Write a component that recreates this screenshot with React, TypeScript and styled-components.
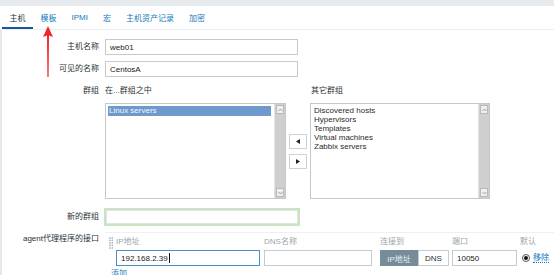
import React from "react"
import styled, { createGlobalStyle } from "styled-components"

const GlobalStyle = createGlobalStyle`
  html, body {
    margin: 0;
    padding: 0;
    background: #fff;
    overflow: hidden;
  }
  body {
    font-family: "Liberation Sans", "Noto Sans CJK SC", sans-serif;
    font-size: 8px;
    color: #2a3338;
  }
`

const Page = styled.div`
  position: relative;
  width: 554px;
  height: 275px;
  overflow: hidden;
`

const TopBand = styled.div`
  height: 6px;
  background: #e8ebee;
`

const TabBar = styled.div`
  display: flex;
  height: 23px;
  padding-left: 2px;
  border-bottom: 1px solid #eceff1;
`

const Tab = styled.div<{ $active?: boolean }>`
  display: flex;
  align-items: center;
  padding: 0 7.5px;
  margin-top: 1px;
  color: ${(p) => (p.$active ? "#2a3338" : "#1479bd")};
  border-bottom: 2px solid ${(p) => (p.$active ? "#14599a" : "transparent")};
`

const FormBody = styled.div`
  display: flex;
  flex-direction: column;
  border-left: 2px solid #e6e9ec;
  padding-top: 9px;
  min-height: 260px;
`

const Row = styled.div<{ $top?: number; $align?: string }>`
  display: grid;
  grid-template-columns: 97px 1fr;
  column-gap: 6px;
  align-items: ${(p) => p.$align ?? "center"};
  margin-top: ${(p) => p.$top ?? 0}px;
`

const Label = styled.div`
  text-align: right;
  line-height: 10px;
  white-space: nowrap;
`

const TextInput = styled.div<{ $w: number; $focus?: boolean }>`
  box-sizing: border-box;
  width: ${(p) => p.$w}px;
  height: 16px;
  border: 1px solid ${(p) => (p.$focus ? "#4a8fc4" : "#c4ccd0")};
  padding-left: 4px;
  display: flex;
  align-items: center;
  background: #fff;
  color: #222;
`

const GreenInput = styled.div`
  box-sizing: border-box;
  width: 196px;
  height: 18px;
  margin-left: -1px;
  border: 2px solid #c9e3c4;
  background: #fff;
  box-shadow: inset 0 0 0 1px #dfe6e0;
`

const Caret = styled.span`
  display: inline-block;
  width: 1px;
  height: 10px;
  background: #111;
  margin-left: 1px;
`

const GroupArea = styled.div`
  display: grid;
  grid-template-columns: 181px 18px 180px;
  column-gap: 3px;
  row-gap: 7px;
  align-items: center;
`

const ListHead = styled.div`
  line-height: 10px;
`

const ListBox = styled.div`
  box-sizing: border-box;
  height: 96px;
  border: 1px solid #c2c8cc;
  display: flex;
  background: #fff;
`

const ListItems = styled.div`
  flex: 1;
  padding: 2px 2px 0 2px;
`

const Item = styled.div<{ $selected?: boolean }>`
  line-height: 9px;
  height: 9px;
  padding: 0 1px;
  color: ${(p) => (p.$selected ? "#f4f7fb" : "#2b2b2b")};
  background: ${(p) => (p.$selected ? "#6f98cc" : "transparent")};
  ${(p) => (p.$selected ? "height: 10px; line-height: 10px; margin-right: 1px;" : "")}
`

const ScrollTrack = styled.div`
  width: 10px;
  background: #cfcfcf;
  display: flex;
  flex-direction: column;
  justify-content: space-between;
  border-left: 1px solid #e4e4e4;
`

const ScrollBtn = styled.div`
  height: 9px;
  margin: 1px;
  background: #efefef;
  border: 1px solid #b9b9b9;
  box-sizing: border-box;
  display: flex;
  align-items: center;
  justify-content: center;
`

const MoveButtons = styled.div`
  display: flex;
  flex-direction: column;
  gap: 5px;
  margin-top: 1px;
`

const MoveBtn = styled.div`
  box-sizing: border-box;
  width: 18px;
  height: 15px;
  border: 1px solid #cdd3d6;
  background: #fff;
  display: flex;
  align-items: center;
  justify-content: center;
`

const InterfaceBlock = styled.div`
  display: flex;
  border-top: 1px solid #eef0f2;
  padding: 3px 0 0 4px;
  gap: 3px;
`

const DragHandle = styled.div`
  width: 4px;
  height: 12px;
  margin-top: 1px;
  background-image: radial-gradient(circle at 1px 1px, #a7b1b7 0.7px, transparent 0.9px);
  background-size: 2.5px 2.5px;
`

const IfaceGrid = styled.div`
  display: grid;
  grid-template-columns: 148px 116px 72px 68px auto;
  row-gap: 3px;
  align-items: center;
`

const Head = styled.div`
  line-height: 10px;
  color: #9aa6ac;
  padding-top: 1px;
`

const Segment = styled.div`
  display: flex;
  height: 16px;
  width: 69px;
`

const SegBtn = styled.div<{ $active?: boolean; $w: number }>`
  box-sizing: border-box;
  width: ${(p) => p.$w}px;
  display: flex;
  align-items: center;
  justify-content: center;
  background: ${(p) => (p.$active ? "#768d99" : "#fff")};
  color: ${(p) => (p.$active ? "#e9eef0" : "#2a3338")};
  border: 1px solid ${(p) => (p.$active ? "#768d99" : "#c4ccd0")};
`

const DefaultCell = styled.div`
  display: flex;
  align-items: center;
  gap: 3px;
  padding-left: 2px;
`

const Radio = styled.div`
  box-sizing: border-box;
  width: 8px;
  height: 8px;
  border-radius: 50%;
  border: 1px solid #555;
  display: flex;
  align-items: center;
  justify-content: center;
  &::after {
    content: "";
    width: 4px;
    height: 4px;
    border-radius: 50%;
    background: #111;
  }
`

const Link = styled.span`
  color: #1479bd;
  border-bottom: 1px dotted #1479bd;
  line-height: 9px;
`

const AddLink = styled.div`
  margin: 3px 0 0 6px;
  color: #1479bd;
  line-height: 10px;
`

const ArrowOverlay = styled.svg`
  position: absolute;
  left: 40px;
  top: 25px;
`

function Chevron(props: { up?: boolean }) {
  return (
    <svg width="5" height="4" viewBox="0 0 5 4">
      <path d={props.up ? "M0.5 3 L2.5 1 L4.5 3" : "M0.5 1 L2.5 3 L4.5 1"} fill="none" stroke="#888" strokeWidth="0.8" />
    </svg>
  )
}

function Triangle(props: { left?: boolean }) {
  return (
    <svg width="4" height="5" viewBox="0 0 4 5">
      <path d={props.left ? "M4 0 L0 2.5 L4 5 Z" : "M0 0 L4 2.5 L0 5 Z"} fill="#222" />
    </svg>
  )
}

function FakeList(props: { items: string[]; selected?: string }) {
  return (
    <ListBox>
      <ListItems>
        {props.items.map((it) => (
          <Item key={it} $selected={it === props.selected}>
            {it}
          </Item>
        ))}
      </ListItems>
      <ScrollTrack>
        <ScrollBtn>
          <Chevron up />
        </ScrollBtn>
        <ScrollBtn>
          <Chevron />
        </ScrollBtn>
      </ScrollTrack>
    </ListBox>
  )
}

const tabs = ["主机", "模板", "IPMI", "宏", "主机资产记录", "加密"]

export default function App() {
  return (
    <Page>
      <GlobalStyle />
      <TopBand />
      <TabBar>
        {tabs.map((t, i) => (
          <Tab key={t} $active={i === 0}>
            {t}
          </Tab>
        ))}
      </TabBar>
      <FormBody>
        <Row>
          <Label>主机名称</Label>
          <TextInput $w={193}>web01</TextInput>
        </Row>
        <Row $top={6}>
          <Label>可见的名称</Label>
          <TextInput $w={193}>CentosA</TextInput>
        </Row>
        <Row $top={9} $align="start">
          <Label>群组</Label>
          <GroupArea>
            <ListHead>在...群组之中</ListHead>
            <div />
            <ListHead style={{ paddingLeft: 1 }}>其它群组</ListHead>
            <FakeList items={["Linux servers"]} selected="Linux servers" />
            <MoveButtons>
              <MoveBtn>
                <Triangle left />
              </MoveBtn>
              <MoveBtn>
                <Triangle />
              </MoveBtn>
            </MoveButtons>
            <FakeList
              items={["Discovered hosts", "Hypervisors", "Templates", "Virtual machines", "Zabbix servers"]}
            />
          </GroupArea>
        </Row>
        <Row $top={9}>
          <Label>新的群组</Label>
          <GreenInput />
        </Row>
        <Row $top={6} $align="start">
          <Label style={{ paddingTop: 2 }}>agent代理程序的接口</Label>
          <div>
            <InterfaceBlock>
              <DragHandle />
              <IfaceGrid>
                <Head>IP地址</Head>
                <Head>DNS名称</Head>
                <Head>连接到</Head>
                <Head>端口</Head>
                <Head>默认</Head>
                <TextInput $w={144} $focus>
                  192.168.2.39
                  <Caret />
                </TextInput>
                <TextInput $w={108} />
                <Segment>
                  <SegBtn $active $w={38}>
                    IP地址
                  </SegBtn>
                  <SegBtn $w={31}>DNS</SegBtn>
                </Segment>
                <TextInput $w={65}>10050</TextInput>
                <DefaultCell>
                  <Radio />
                  <Link>移除</Link>
                </DefaultCell>
              </IfaceGrid>
            </InterfaceBlock>
            <AddLink>添加</AddLink>
          </div>
        </Row>
      </FormBody>
      <ArrowOverlay width="16" height="54" viewBox="0 0 16 54">
        <path d="M8 1 L13 12 L9 10.5 L8.6 52 L7.4 52 L7 10.5 L3 12 Z" fill="#f0262b" />
      </ArrowOverlay>
    </Page>
  )
}
